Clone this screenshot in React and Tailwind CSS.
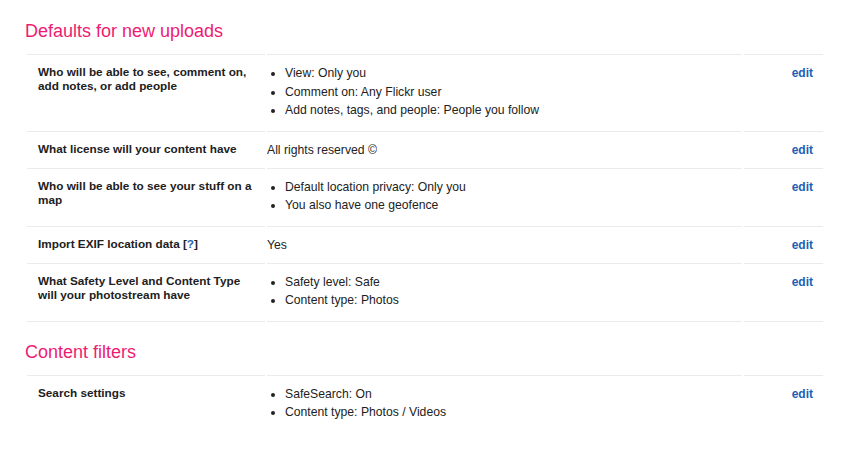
const uploads = [
  {
    label: "Who will be able to see, comment on, add notes, or add people",
    items: ["View: Only you", "Comment on: Any Flickr user", "Add notes, tags, and people: People you follow"],
  },
  { label: "What license will your content have", text: "All rights reserved ©" },
  {
    label: "Who will be able to see your stuff on a map",
    items: ["Default location privacy: Only you", "You also have one geofence"],
  },
  { label: "Import EXIF location data", help: true, text: "Yes" },
  {
    label: "What Safety Level and Content Type will your photostream have",
    items: ["Safety level: Safe", "Content type: Photos"],
  },
];

const filters = [
  { label: "Search settings", items: ["SafeSearch: On", "Content type: Photos / Videos"] },
];

function Row({ row, last }) {
  const border = last ? "border-t border-b border-[#ebebeb]" : "border-t border-[#ebebeb]";
  return (
    <div className="grid grid-cols-[238px_475px_79px] gap-x-[2px]">
      <div className={`${border} pl-[11px] pr-2 pt-[10px] text-[11.75px] leading-[14px] font-bold text-[#212121]`}>
        {row.label}
        {row.help && (
          <>
            {" "}[<a className="text-[#2160b5]">?</a>]
          </>
        )}
      </div>
      <div className={`${border} pt-[9px] pb-[9px] text-[12.2px] text-[#222]`}>
        {row.items ? (
          <ul className="list-disc pl-[18px] mb-[2px]">
            {row.items.map((t) => (
              <li key={t} className="leading-[18.5px]">{t}</li>
            ))}
          </ul>
        ) : (
          <div className="leading-[18px]">{row.text}</div>
        )}
      </div>
      <div className={`${border} pt-[9px] pr-[10px] text-right text-[12px] leading-[18px] font-bold`}>
        <a className="text-[#2160b5]">edit</a>
      </div>
    </div>
  );
}

function Section({ title, rows, closed, className = "" }) {
  return (
    <section className={className}>
      <h2 className="text-[18px] leading-[22px] text-[#ee1b73] mb-[12px]">{title}</h2>
      <div className="ml-[2px] w-[796px]">
        {rows.map((r, i) => (
          <Row key={r.label} row={r} last={closed && i === rows.length - 1} />
        ))}
      </div>
    </section>
  );
}

export default function App() {
  return (
    <div className="min-h-[461px] bg-white pl-[25px] pt-[20px] font-['Liberation_Sans',Arial,sans-serif]">
      <Section title="Defaults for new uploads" rows={uploads} closed />
      <Section title="Content filters" rows={filters} className="mt-[19px]" />
    </div>
  );
}
